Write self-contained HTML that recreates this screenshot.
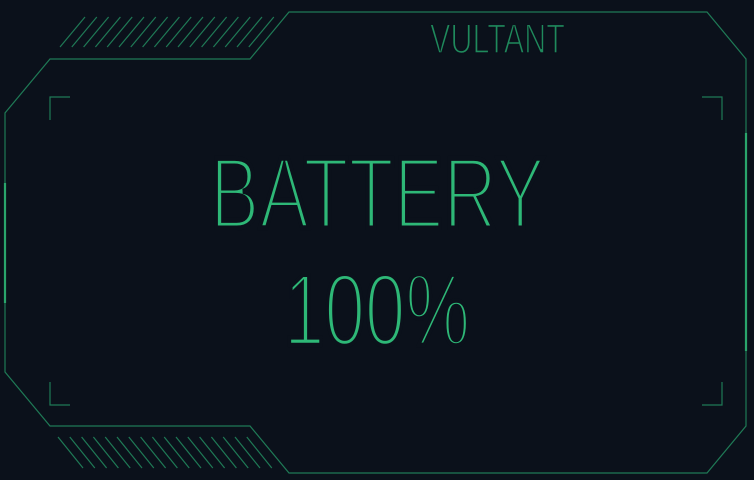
<!DOCTYPE html>
<html><head><meta charset="utf-8"><style>
html,body{margin:0;padding:0;background:#0b111b;}
svg{display:block}
text{font-family:"Liberation Sans",sans-serif;}
</style></head><body>
<svg width="754" height="480" viewBox="0 0 754 480" xmlns="http://www.w3.org/2000/svg">
<rect width="754" height="480" fill="#0b111b"/>
<g fill="none" stroke="#1f7a56" stroke-width="1.2">
<path d="M289,12 H707 L746,59 V426 L707,473 H289 L250,426 H50 L5,372 V113 L50,59 H250 Z"/>
<path d="M50,120 V97 H70 M702,97 H722 V120 M50,382 V405 H70 M702,405 H722 V382"/>
<path d="M60,47 L85,17 M71.8,47 L96.8,17 M83.6,47 L108.6,17 M95.4,47 L120.4,17 M107.2,47 L132.2,17 M119,47 L144,17 M130.8,47 L155.8,17 M142.6,47 L167.6,17 M154.4,47 L179.4,17 M166.2,47 L191.2,17 M178,47 L203,17 M189.8,47 L214.8,17 M201.6,47 L226.6,17 M213.4,47 L238.4,17 M225.2,47 L250.2,17 M237,47 L262,17 M248.8,47 L273.8,17"/>
<path d="M58,437 L83,468 M69.8,437 L94.8,468 M81.6,437 L106.6,468 M93.4,437 L118.4,468 M105.2,437 L130.2,468 M117,437 L142,468 M128.8,437 L153.8,468 M140.6,437 L165.6,468 M152.4,437 L177.4,468 M164.2,437 L189.2,468 M176,437 L201,468 M187.8,437 L212.8,468 M199.6,437 L224.6,468 M211.4,437 L236.4,468 M223.2,437 L248.2,468 M235,437 L260,468 M246.8,437 L271.8,468"/>
</g>
<path d="M5,183 V303 M746,133 V351" stroke="#2aa56c" stroke-width="2.2"/>
<text x="430" y="53" font-size="42" textLength="135" lengthAdjust="spacingAndGlyphs" fill="#1f8a5c" stroke="#0b111b" stroke-width="1.6">VULTANT</text>
<text x="210" y="228" font-size="101" textLength="335" lengthAdjust="spacingAndGlyphs" fill="#2eb877" stroke="#0b111b" stroke-width="5">BATTERY</text>
<text x="284" y="345" font-size="102" textLength="186" lengthAdjust="spacingAndGlyphs" fill="#2eb877" stroke="#0b111b" stroke-width="4.5">100%</text>
</svg>
</body></html>
